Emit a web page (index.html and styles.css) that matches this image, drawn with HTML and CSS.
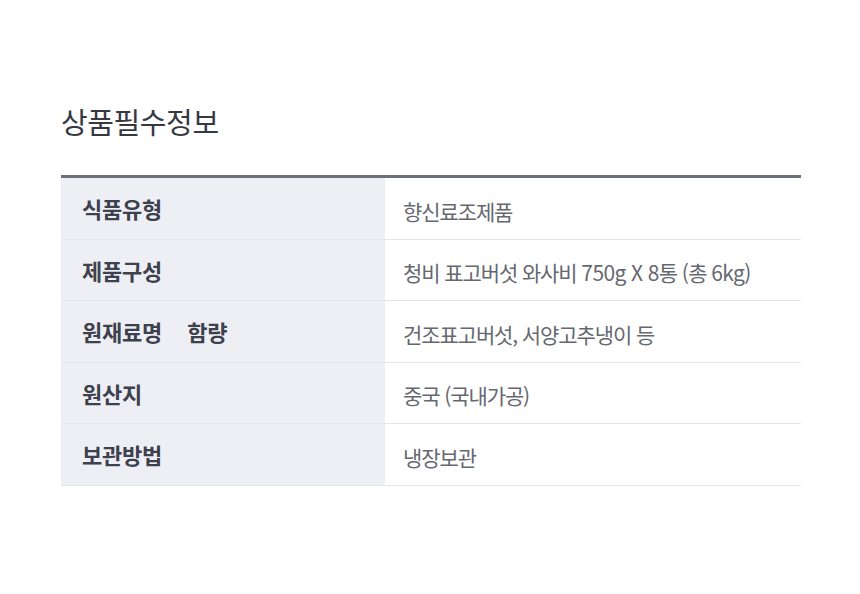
FILE: index.html
```html
<!DOCTYPE html>
<html lang="ko">
<head>
<meta charset="utf-8">
<link rel="stylesheet" href="styles.css">
</head>
<body>
<main class="page">
  <h2 class="title">상품필수정보</h2>
  <div class="info">
    <div class="row"><div class="label">식품유형</div><div class="value">향신료조제품</div></div>
    <div class="row"><div class="label">제품구성</div><div class="value"><span>청비 표고버섯 와사비 <span class="lat">750g X 8</span>통 <span class="lat">(</span>총 <span class="lat">6kg)</span></span></div></div>
    <div class="row"><div class="label">원재료명<span class="gap"></span>함량</div><div class="value">건조표고버섯, 서양고추냉이 등</div></div>
    <div class="row"><div class="label">원산지</div><div class="value">중국 (국내가공)</div></div>
    <div class="row"><div class="label">보관방법</div><div class="value">냉장보관</div></div>
  </div>
</main>
</body>
</html>
```

FILE: styles.css
```css
html, body {
  margin: 0;
  padding: 0;
  background: #ffffff;
}
.page {
  padding: 103px 0 0 61px;
  width: 740px;
  font-family: "Noto Sans CJK KR", "Noto Sans", sans-serif;
}
.title {
  margin: 0;
  font-size: 29px;
  line-height: 36px;
  font-weight: 400;
  color: #363943;
  letter-spacing: -0.4px;
}
.info {
  margin-top: 36px;
  border-top: 3px solid #6b707b;
}
.row {
  display: flex;
  height: 60.5px;
  border-bottom: 1px solid #e3e4ec;
}
.label {
  width: 303px;
  flex: none;
  padding-left: 21px;
  background: #eeeff4;
  display: flex;
  align-items: center;
  font-size: 22px;
  font-weight: 700;
  color: #3d414d;
  letter-spacing: -0.2px;
}
.gap {
  display: inline-block;
  width: 25px;
}
.value {
  flex: 1;
  padding: 5px 0 0 18px;
  display: flex;
  align-items: center;
  font-size: 21px;
  font-weight: 400;
  color: #666870;
  letter-spacing: -1.1px;
}
.lat {
  letter-spacing: -0.6px;
}
```
